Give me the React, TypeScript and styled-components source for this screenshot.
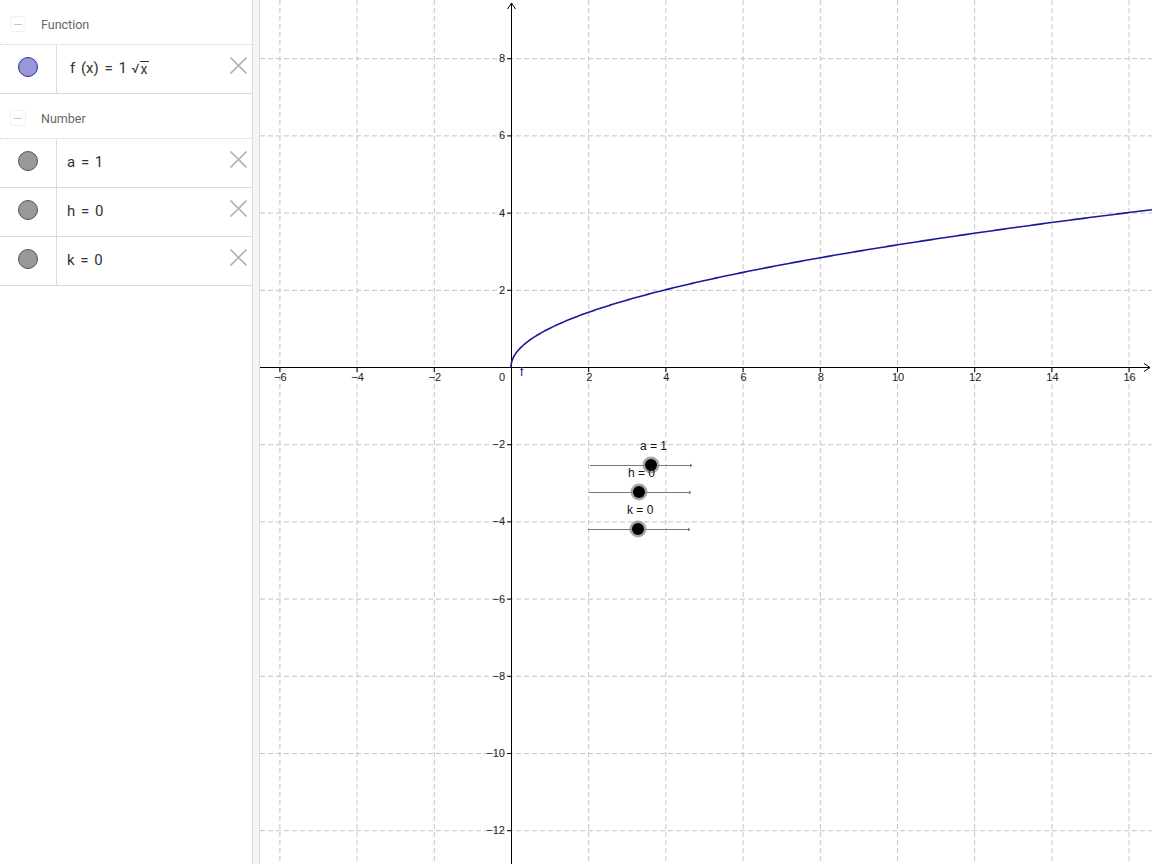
import React from 'react';
import styled, { createGlobalStyle } from 'styled-components';

/* ─────────────────────────── global ─────────────────────────── */
const GlobalStyle = createGlobalStyle`
  html, body {
    margin: 0;
    padding: 0;
    background: #fff;
    overflow: hidden;
  }
  body {
    font-family: Roboto, "Noto Sans", "Liberation Sans", sans-serif;
  }
`;

/* ─────────────────────────── layout ─────────────────────────── */
const Shell = styled.div`
  display: flex;
  width: 1152px;
  height: 864px;
`;

const AlgebraPanel = styled.aside`
  width: 252px;
  flex: 0 0 252px;
  border-right: 1px solid #dcdcdc;
  background: #fff;
  display: flex;
  flex-direction: column;
`;

const Splitter = styled.div`
  width: 6px;
  flex: 0 0 6px;
  background: #f5f5f5;
  border-right: 1px solid #dcdcdc;
`;

const GraphicsView = styled.main`
  flex: 1;
  position: relative;
  background: #fff;
  overflow: hidden;
`;

/* ─────────────────────────── algebra items ─────────────────────────── */
const GroupHeader = styled.div`
  height: 40px;
  padding: 4px 0 0 10px;
  display: flex;
  align-items: center;
  gap: 15px;
  border-bottom: 1px dotted #d0d0d0;
`;

const CollapseBox = styled.span`
  width: 14px;
  height: 14px;
  border: 1px solid #f0f0f0;
  border-radius: 3px;
  display: flex;
  align-items: center;
  justify-content: center;

  &::after {
    content: '';
    width: 8px;
    height: 1px;
    background: #c8c8c8;
  }
`;

const GroupTitle = styled.span`
  font-size: 12.5px;
  color: #666;
`;

const ItemRow = styled.div`
  height: 48px;
  display: flex;
  align-items: stretch;
  border-bottom: 1px solid #dcdcdc;
`;

const MarkerCell = styled.div`
  width: 57px;
  flex: 0 0 57px;
  border-right: 1px solid #dcdcdc;
  display: flex;
  align-items: flex-start;
  justify-content: center;
  padding: 12px 1px 0 0;
  box-sizing: border-box;
`;

const Marker = styled.span<{ $fill: string; $edge: string }>`
  width: 18px;
  height: 18px;
  border-radius: 50%;
  background: ${(p) => p.$fill};
  border: 1px solid ${(p) => p.$edge};
`;

const Formula = styled.div<{ $indent: number }>`
  flex: 1;
  display: flex;
  align-items: flex-start;
  padding: 14px 0 0 ${(p) => 10 + p.$indent}px;
  font-size: 15px;
  word-spacing: 2px;
  color: #333;
  white-space: pre;
`;

const Radical = styled.span`
  display: inline-flex;
  align-items: flex-end;
  margin-left: 5px;

  &::before {
    content: '√';
    font-size: 13px;
  }
`;

const Radicand = styled.span`
  border-top: 1px solid #333;
  line-height: 14px;
  font-size: 14px;
  padding: 0 1px;
  margin-top: 2px;
`;

const DeleteButton = styled.button`
  width: 28px;
  flex: 0 0 28px;
  border: 0;
  background: transparent;
  padding: 12px 0 0 0;
  display: flex;
  align-items: flex-start;
  justify-content: center;
  cursor: pointer;
`;

const CrossIcon: React.FC = () => (
  <svg width="17" height="17" viewBox="0 0 17 17">
    <path d="M0.5 0.5 L16.5 16.5 M16.5 0.5 L0.5 16.5" stroke="#b4b4b4" strokeWidth="1.6" fill="none" />
  </svg>
);

type Item = { key: string; fill: string; edge: string; indent: number; body: React.ReactNode };

const functionItems: Item[] = [
  {
    key: 'f',
    fill: '#9898d8',
    edge: '#2a2aa8',
    indent: 3,
    body: (
      <>
        f (x) = 1<Radical><Radicand>x</Radicand></Radical>
      </>
    ),
  },
];

const numberItems: Item[] = [
  { key: 'a', fill: '#999999', edge: '#555555', indent: 0, body: 'a = 1' },
  { key: 'h', fill: '#999999', edge: '#555555', indent: 0, body: 'h = 0' },
  { key: 'k', fill: '#999999', edge: '#555555', indent: 0, body: 'k = 0' },
];

const Group: React.FC<{ title: string; items: Item[] }> = ({ title, items }) => (
  <>
    <GroupHeader>
      <CollapseBox />
      <GroupTitle>{title}</GroupTitle>
    </GroupHeader>
    {items.map((it) => (
      <ItemRow key={it.key}>
        <MarkerCell>
          <Marker $fill={it.fill} $edge={it.edge} />
        </MarkerCell>
        <Formula $indent={it.indent}>{it.body}</Formula>
        <DeleteButton aria-label="delete">
          <CrossIcon />
        </DeleteButton>
      </ItemRow>
    ))}
  </>
);

/* ─────────────────────────── graphics ─────────────────────────── */
const W = 892;
const H = 864;
const OX = 251; // origin, local coordinates
const OY = 367;
const S = 38.6; // px per unit

const px = (x: number) => OX + x * S;
const py = (y: number) => OY - y * S;

const xTicks = [-6, -4, -2, 2, 4, 6, 8, 10, 12, 14, 16];
const yTicks = [8, 6, 4, 2, -2, -4, -6, -8, -10, -12];

const fmt = (n: number) => (n < 0 ? `\u2212${-n}` : `${n}`);

const curvePath = (() => {
  const pts: string[] = [];
  const tMax = Math.sqrt((W - OX) / S);
  for (let i = 0; i <= 300; i++) {
    const t = (tMax * i) / 300;
    pts.push(`${px(t * t).toFixed(2)},${py(t).toFixed(2)}`);
  }
  return 'M' + pts.join(' L');
})();

const sliders = [
  { name: 'a = 1', x1: 330, x2: 432, y: 465, knob: 391 },
  { name: 'h = 0', x1: 329, x2: 431, y: 492, knob: 379 },
  { name: 'k = 0', x1: 328, x2: 430, y: 529, knob: 378 },
];

const Plot = styled.svg`
  display: block;
  font-family: "Liberation Sans", Arial, sans-serif;
`;

const Graph: React.FC = () => (
  <Plot width={W} height={H} viewBox={`0 0 ${W} ${H}`}>
    {/* grid */}
    <g stroke="#c4c4c4" strokeWidth="1" strokeDasharray="5 3">
      {xTicks.map((v) => (
        <line key={`gx${v}`} x1={px(v) + 0.5} y1={0} x2={px(v) + 0.5} y2={H} />
      ))}
      {yTicks.map((v) => (
        <line key={`gy${v}`} x1={0} y1={py(v) + 0.5} x2={W} y2={py(v) + 0.5} />
      ))}
    </g>

    {/* axes */}
    <g stroke="#000" strokeWidth="1" fill="none">
      <line x1={0} y1={OY + 0.5} x2={W - 2} y2={OY + 0.5} />
      <path d={`M${W - 8} ${OY - 3.5} L${W - 2} ${OY + 0.5} L${W - 8} ${OY + 4.5}`} />
      <line x1={OX + 0.5} y1={H} x2={OX + 0.5} y2={3} />
      <path d={`M${OX - 3.5} 9 L${OX + 0.5} 3 L${OX + 4.5} 9`} />
      {xTicks.map((v) => (
        <line key={`tx${v}`} x1={px(v) + 0.5} y1={OY} x2={px(v) + 0.5} y2={OY + 5} />
      ))}
      {yTicks.map((v) => (
        <line key={`ty${v}`} x1={OX - 4} y1={py(v) + 0.5} x2={OX + 1} y2={py(v) + 0.5} />
      ))}
    </g>

    {/* axis labels */}
    <g fontSize="11" fill="#222">
      {xTicks.map((v) => (
        <text key={`lx${v}`} x={px(v) + 1} y={OY + 14} textAnchor="middle">
          {fmt(v)}
        </text>
      ))}
      <text x={OX - 6} y={OY + 14} textAnchor="end">0</text>
      {yTicks.map((v) => (
        <text key={`ly${v}`} x={OX - 6} y={py(v) + 4} textAnchor="end">
          {fmt(v)}
        </text>
      ))}
    </g>

    {/* f(x) = a·sqrt(x - h) + k */}
    <path d={curvePath} stroke="#1818a0" strokeWidth="1.6" fill="none" />
    <text x={OX + 9} y={OY + 9} fontSize="12" fill="#1818a0">f</text>

    {/* sliders */}
    {sliders.map((s) => (
      <g key={s.name}>
        <line x1={s.x1} y1={s.y + 0.5} x2={s.x2} y2={s.y + 0.5} stroke="#7a7a7a" strokeWidth="1" />
        <path d={`M${s.x2 - 2} ${s.y - 1} L${s.x2} ${s.y + 0.5} L${s.x2 - 2} ${s.y + 2}`} stroke="#7a7a7a" fill="none" />
        <text x={s.knob - 11} y={s.y - 15} fontSize="12" fill="#111">{s.name}</text>
        <circle cx={s.knob} cy={s.y} r={8.5} fill="#8a8a8a" opacity="0.75" />
        <circle cx={s.knob} cy={s.y} r={6} fill="#000" />
      </g>
    ))}
  </Plot>
);

/* ─────────────────────────── app ─────────────────────────── */
const App: React.FC = () => (
  <>
    <GlobalStyle />
    <Shell>
      <AlgebraPanel>
        <Group title="Function" items={functionItems} />
        <Group title="Number" items={numberItems} />
      </AlgebraPanel>
      <Splitter />
      <GraphicsView>
        <Graph />
      </GraphicsView>
    </Shell>
  </>
);

export default App;
